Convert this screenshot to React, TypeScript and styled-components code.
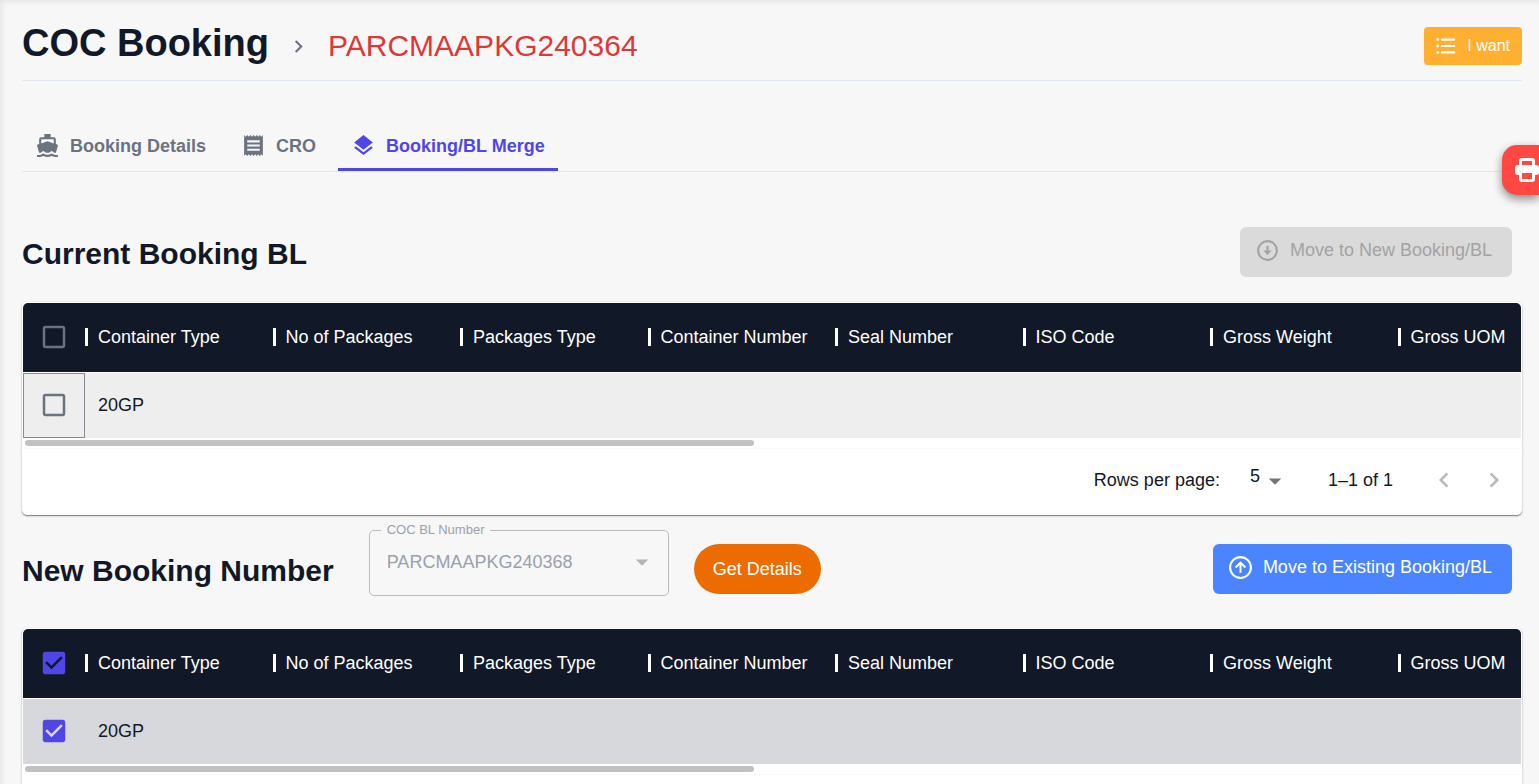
import React from "react";
import styled, { createGlobalStyle } from "styled-components";
import {
  MdArrowDropDown,
  MdChevronLeft,
  MdChevronRight,
  MdDirectionsBoat,
  MdLayers,
  MdReceipt,
} from "react-icons/md";

const GlobalStyle = createGlobalStyle`
  * { box-sizing: border-box; }
  html, body { margin: 0; }
  body {
    background: #f7f7f7;
    color: #111827;
    font-family: "Liberation Sans", Arial, sans-serif;
    font-size: 18px;
    line-height: 24px;
  }
  button, select, input { font: inherit; color: inherit; }
`;

const Page = styled.main`
  display: flex;
  flex-direction: column;
  min-height: 100vh;
  padding: 0 17px 0 22px;
  box-shadow: inset 4px 4px 6px -3px rgba(0, 0, 0, 0.09);
`;

const Header = styled.header`
  display: flex;
  align-items: center;
  justify-content: space-between;
  height: 81px;
  padding-top: 12px;
  border-bottom: 1px solid #e2e8f0;
`;

const Crumbs = styled.nav`
  display: flex;
  align-items: center;
  gap: 17px;
`;

const Title = styled.h1`
  margin: 0;
  padding-bottom: 6px;
  font-size: 38px;
  line-height: 48px;
`;

const BookingNumber = styled.a`
  color: #dc3838;
  font-size: 30px;
  line-height: 40px;
  text-decoration: none;
`;

const ChevronIcon = styled(MdChevronRight)`
  color: #6b7280;
`;

const WantButton = styled.button`
  display: flex;
  align-items: center;
  gap: 10px;
  height: 38px;
  padding: 0 12px 0 11px;
  border: 0;
  border-radius: 4px;
  background: #ffb030;
  color: #fff;
  font-size: 16px;
`;

const Tabs = styled.div`
  display: flex;
  height: 51px;
  margin-top: 40px;
  border-bottom: 1px solid #e2e8f0;
`;

const Tab = styled.button<{ $active?: boolean }>`
  display: flex;
  align-items: center;
  gap: 10px;
  height: 50px;
  padding: 2px 13px 0;
  border: 0;
  border-bottom: 3px solid ${(p) => (p.$active ? "#4f46e5" : "transparent")};
  background: none;
  color: ${(p) => (p.$active ? "#4f46e5" : "#6b7280")};
  font-weight: 700;
  & + & { margin-left: 9px; }
`;

const PrintButton = styled.button`
  position: absolute;
  top: 145px;
  right: 0;
  display: flex;
  align-items: center;
  width: 37px;
  height: 50px;
  padding: 0 0 0 12px;
  border: 0;
  border-radius: 15px 0 0 15px;
  background: #ff4842;
  color: #fff;
  overflow: hidden;
  box-shadow: 0 4px 10px rgba(0, 0, 0, 0.45);
  svg { flex: none; }
`;

const SectionBar = styled.div<{ $top: number; $bottom: number }>`
  display: flex;
  align-items: flex-end;
  justify-content: space-between;
  padding: ${(p) => p.$top}px 10px ${(p) => p.$bottom}px 0;
`;

const SectionTitle = styled.h2`
  margin: 0;
  padding-top: 4px;
  font-size: 30px;
  line-height: 46px;
`;

const SearchGroup = styled.div`
  display: flex;
  align-items: flex-end;
`;

const MoveButton = styled.button`
  display: flex;
  align-items: center;
  gap: 10px;
  height: 50px;
  padding: 0 20px 4px 15px;
  border: 0;
  border-radius: 6px;
  background: #4a85ff;
  color: #fff;
  &:disabled {
    background: #dadada;
    color: #a3a3a3;
  }
`;

const Field = styled.fieldset`
  display: flex;
  align-items: center;
  width: 300px;
  height: 74px;
  margin: 0 25px -2px 35px;
  padding: 0 11px 10px 17px;
  border: 1px solid #b9bbbd;
  border-radius: 5px;
  color: #9aa1ab;
  svg { color: #b5b5b5; }
`;

const FieldLegend = styled.legend`
  margin-left: -6px;
  padding: 0 6px;
  font-size: 13px;
  line-height: 16px;
`;

const FieldSelect = styled.select`
  flex: 1;
  padding: 0;
  border: 0;
  outline: 0;
  background: none;
  appearance: none;
  &:disabled { opacity: 1; color: #9aa1ab; }
`;

const DetailsButton = styled.button`
  height: 50px;
  padding: 0 19px;
  border: 0;
  border-radius: 25px;
  background: #ed6c02;
  color: #fff;
`;

const Card = styled.section<{ $grow: boolean }>`
  flex: ${(p) => (p.$grow ? "1" : "none")};
  padding: 1px 1px 0;
  border-radius: ${(p) => (p.$grow ? "5px 5px 0 0" : "5px")};
  background: #fff;
  box-shadow: 0 1px 1px rgba(0, 0, 0, 0.4), 0 1px 3px rgba(0, 0, 0, 0.16);
`;

const TableClip = styled.div`
  overflow: hidden;
  border-radius: 5px 5px 0 0;
`;

const Table = styled.table`
  width: calc(100% + 64px);
  table-layout: fixed;
  border-collapse: collapse;
`;

const CheckHead = styled.th`
  width: 62px;
  padding: 0;
  background: #111827;
`;

const HeadCell = styled.th`
  height: 69px;
  padding: 0;
  background: #111827;
  color: #fff;
  font-weight: 400;
  text-align: left;
  white-space: nowrap;
`;

const HeadLabel = styled.span`
  display: flex;
  align-items: center;
  gap: 10px;
  &::before {
    content: "";
    width: 3px;
    height: 18px;
    background: #fff;
  }
`;

const Row = styled.tr<{ $selected?: boolean }>`
  height: 66px;
  border-top: 1px solid #fff;
  background: ${(p) => (p.$selected ? "#d7d8dc" : "#eeeeee")};
`;

const Cell = styled.td`
  padding: 0 13px;
`;

const CheckCell = styled.td<{ $focused?: boolean }>`
  padding: 0;
  box-shadow: ${(p) => (p.$focused ? "inset 0 0 0 1px #878c96" : "none")};
`;

const CheckLabel = styled.label`
  position: relative;
  display: block;
  width: 30px;
  height: 30px;
  margin: 0 auto;
  svg { display: block; }
`;

const CheckInput = styled.input`
  position: absolute;
  inset: 0;
  width: 100%;
  height: 100%;
  margin: 0;
  opacity: 0;
`;

const ScrollTrack = styled.div`
  height: 11px;
  padding: 2px;
  border-bottom: 1px solid #fafafa;
`;

const ScrollThumb = styled.div`
  height: 6px;
  border-radius: 3px;
  background: #c1c1c1;
`;

const Pagination = styled.div`
  display: flex;
  align-items: center;
  justify-content: flex-end;
  height: 66px;
  padding: 0 12px 4px 0;
`;

const PageSize = styled.span`
  display: flex;
  align-items: center;
  margin: 0 38px 0 30px;
  svg { color: #757575; margin-top: 2px; }
`;

const PageSizeSelect = styled.select`
  width: 10px;
  padding: 0 0 8px;
  border: 0;
  background: none;
  appearance: none;
`;

const PageButtons = styled.span`
  display: flex;
  gap: 20px;
  margin-left: 36px;
`;

const PageButton = styled.button`
  display: flex;
  padding: 0;
  border: 0;
  background: none;
  &:disabled { color: #b8b8b8; }
`;

const columns = [
  "Container Type",
  "No of Packages",
  "Packages Type",
  "Container Number",
  "Seal Number",
  "ISO Code",
  "Gross Weight",
  "Gross UOM",
];

function Checkbox({ label, checked }: { label: string; checked: boolean }) {
  return (
    <CheckLabel>
      <CheckInput type="checkbox" aria-label={label} defaultChecked={checked} />
      <svg width="30" height="30" viewBox="0 0 24 24" fill={checked ? "#4f46e5" : "#6b7280"}>
        {checked ? (
          <path d="M19 3H5c-1.11 0-2 .9-2 2v14c0 1.1.89 2 2 2h14c1.11 0 2-.9 2-2V5c0-1.1-.89-2-2-2zm-9 14l-5-5 1.41-1.41L10 14.17l7.59-7.59L19 8l-9 9z" />
        ) : (
          <path d="M19 5v14H5V5h14m0-2H5c-1.1 0-2 .9-2 2v14c0 1.1.9 2 2 2h14c1.1 0 2-.9 2-2V5c0-1.1-.9-2-2-2z" />
        )}
      </svg>
    </CheckLabel>
  );
}

function CircleUpIcon() {
  return (
    <svg width="25" height="25" viewBox="0 0 24 24" fill="none" stroke="currentColor" strokeWidth="2">
      <circle cx="12" cy="12" r="10" />
      <path d="M12 17V8M7.3 12L12 7.3l4.7 4.7" />
    </svg>
  );
}

function CircleDownIcon() {
  return (
    <svg width="25" height="25" viewBox="0 0 24 24" fill="none" stroke="currentColor" strokeWidth="2">
      <circle cx="12" cy="12" r="9" />
      <path d="M12 7.6v5.4" />
      <path d="M8 12h8l-4 4.2z" fill="currentColor" stroke="none" />
    </svg>
  );
}

function ContainerTable({
  name,
  selected,
  paginated = false,
}: {
  name: string;
  selected: boolean;
  paginated?: boolean;
}) {
  return (
    <Card aria-label={name} $grow={!paginated}>
      <TableClip>
        <Table>
          <thead>
            <tr>
              <CheckHead>
                <Checkbox label="Select all rows" checked={selected} />
              </CheckHead>
              {columns.map((column) => (
                <HeadCell key={column}>
                  <HeadLabel>{column}</HeadLabel>
                </HeadCell>
              ))}
            </tr>
          </thead>
          <tbody>
            <Row $selected={selected}>
              <CheckCell $focused={!selected}>
                <Checkbox label="Select row" checked={selected} />
              </CheckCell>
              <Cell>20GP</Cell>
              <Cell colSpan={7} />
            </Row>
          </tbody>
        </Table>
      </TableClip>
      <ScrollTrack>
        <ScrollThumb style={{ width: `${(8 / 16.4) * 100}%` }} />
      </ScrollTrack>
      {paginated && (
        <Pagination>
          <span>Rows per page:</span>
          <PageSize>
            <PageSizeSelect aria-label="Rows per page" defaultValue="5">
              <option>5</option>
            </PageSizeSelect>
            <MdArrowDropDown size={30} />
          </PageSize>
          <span>1–1 of 1</span>
          <PageButtons>
            <PageButton disabled aria-label="Previous page">
              <MdChevronLeft size={30} />
            </PageButton>
            <PageButton disabled aria-label="Next page">
              <MdChevronRight size={30} />
            </PageButton>
          </PageButtons>
        </Pagination>
      )}
    </Card>
  );
}

export default function App() {
  return (
    <>
      <GlobalStyle />
      <Page>
        <Header>
          <Crumbs>
            <Title>COC Booking</Title>
            <ChevronIcon size={25} />
            <BookingNumber href="#booking">PARCMAAPKG240364</BookingNumber>
          </Crumbs>
          <WantButton>
            <svg width="22" height="22" viewBox="0 0 24 24" fill="none" stroke="currentColor" strokeLinecap="round">
              <path d="M7.5 5H21M7.5 12H21M7.5 19H21" strokeWidth="2.3" />
              <path d="M3 5h.01M3 12h.01M3 19h.01" strokeWidth="3.2" />
            </svg>
            I want
          </WantButton>
        </Header>
        <Tabs role="tablist">
          <Tab role="tab"><MdDirectionsBoat size={25} />Booking Details</Tab>
          <Tab role="tab"><MdReceipt size={25} />CRO</Tab>
          <Tab role="tab" $active aria-selected><MdLayers size={25} />Booking/BL Merge</Tab>
        </Tabs>
        <PrintButton aria-label="Print">
          <svg width="26" height="26" viewBox="0 0 26 26">
            <rect x="1" y="8" width="24" height="10" rx="3" fill="currentColor" />
            <rect x="6.5" y="2.5" width="13" height="7" rx="1.5" fill="#ff4842" stroke="currentColor" strokeWidth="3" />
            <rect x="6.5" y="14.5" width="13" height="9" rx="1.5" fill="#ff4842" stroke="currentColor" strokeWidth="3" />
          </svg>
        </PrintButton>
        <SectionBar $top={55} $bottom={25}>
          <SectionTitle>Current Booking BL</SectionTitle>
          <MoveButton disabled><CircleDownIcon />Move to New Booking/BL</MoveButton>
        </SectionBar>
        <ContainerTable name="Current booking containers" selected={false} paginated />
        <SectionBar $top={7} $bottom={34}>
          <SearchGroup>
            <SectionTitle>New Booking Number</SectionTitle>
            <Field>
              <FieldLegend>COC BL Number</FieldLegend>
              <FieldSelect aria-label="COC BL Number" disabled defaultValue="PARCMAAPKG240368">
                <option>PARCMAAPKG240368</option>
              </FieldSelect>
              <MdArrowDropDown size={30} />
            </Field>
            <DetailsButton>Get Details</DetailsButton>
          </SearchGroup>
          <MoveButton><CircleUpIcon />Move to Existing Booking/BL</MoveButton>
        </SectionBar>
        <ContainerTable name="New booking containers" selected />
      </Page>
    </>
  );
}
